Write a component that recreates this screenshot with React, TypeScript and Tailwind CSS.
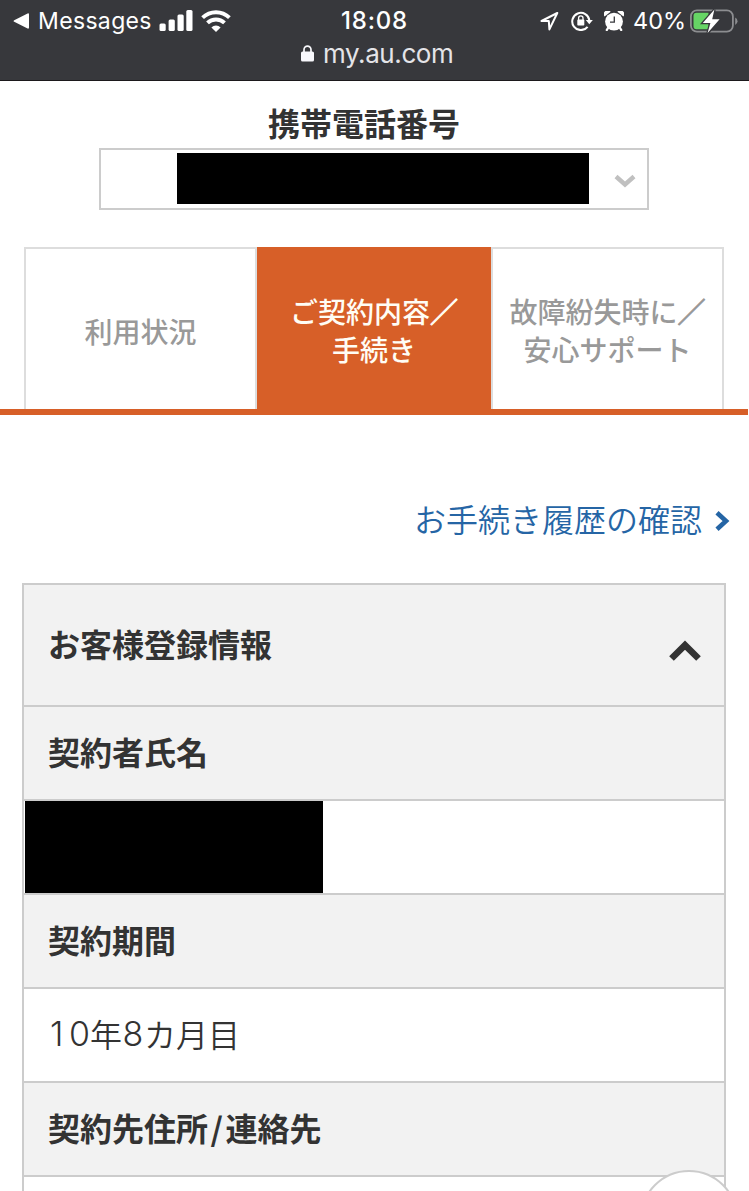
import React from "react";

function Signal() {
  return (
    <svg className="ml-[8px] h-[22px] w-[34px] shrink-0" viewBox="0 0 34 22" fill="#fff">
      <rect x="0.5" y="13.5" width="6.2" height="7.5" rx="1.5" />
      <rect x="9.6" y="9.5" width="6.2" height="11.5" rx="1.5" />
      <rect x="18.5" y="4.5" width="6.2" height="16.5" rx="1.5" />
      <rect x="27.3" y="0" width="6.2" height="21" rx="1.5" />
    </svg>
  );
}

function Wifi() {
  return (
    <svg className="ml-[8px] h-[22px] w-[30px] shrink-0" viewBox="0 0 30 22">
      <g fill="none" stroke="#fff" strokeWidth="3.9">
        <path d="M1.6 7.7a19.2 19.2 0 0 1 26.8 0" />
        <path d="M6.5 12.9a12.2 12.2 0 0 1 17 0" />
      </g>
      <path d="M15 22l-4.6-4.6a6.6 6.6 0 0 1 9.2 0z" fill="#fff" />
    </svg>
  );
}

function Location() {
  return (
    <svg className="h-[20px] w-[19px] shrink-0" viewBox="0 0 19 20">
      <path d="M17.3 2L1.5 10h7.300l.6 8.400z" fill="none" stroke="#fff" strokeWidth="2" strokeLinejoin="round" />
    </svg>
  );
}

function RotationLock() {
  return (
    <svg className="h-[20px] w-[22px] shrink-0" viewBox="0 0 22 20">
      <path d="M16.600 15.800A8.600 8.600 0 1 1 18.400 9.500" fill="none" stroke="#fff" strokeWidth="2" />
      <path d="M14.800 9h7l-3.500 4.200z" fill="#fff" />
      <rect x="6.300" y="8.600" width="7" height="6" rx="0.800" fill="#fff" />
      <path d="M7.600 9V7a2.200 2.200 0 0 1 4.400 0V9" fill="none" stroke="#fff" strokeWidth="1.300" />
    </svg>
  );
}

function Alarm() {
  return (
    <svg className="h-[20px] w-[20px] shrink-0" viewBox="0 0 20 20">
      <circle cx="10" cy="10.600" r="8.900" fill="#fff" />
      <path d="M4.600 16l-1.800 3M15.400 16l1.800 3" stroke="#fff" strokeWidth="2.400" strokeLinecap="round" />
      <path
        d="M.6 5.400A3.600 3.600 0 0 1 6.600.8zM19.400 5.400A3.600 3.600 0 0 0 13.400.8z"
        fill="#fff"
        stroke="#37383c"
        strokeWidth="0.800"
        paintOrder="stroke"
      />
      <path d="M10.300 5.500v5.600H6" fill="none" stroke="#37383c" strokeWidth="1.300" />
    </svg>
  );
}

function Battery() {
  return (
    <svg className="h-[26px] w-[50px] shrink-0" viewBox="0 0 50 26">
      <rect x="1.900" y="2.400" width="42" height="21.200" rx="6" fill="none" stroke="#8c8d90" strokeWidth="1.800" />
      <path d="M46.200 9.500v7.500a4.200 4.200 0 0 0 0-7.500z" fill="#8c8d90" />
      <path d="M7.500 4.700H19.500v16.600H7.500a3 3 0 0 1-3-3V7.700a3 3 0 0 1 3-3z" fill="#66d465" />
      <path
        d="M25.400 1.500L13.800 15h7.600L18.600 25.100 30.600 11.200h-7.400z"
        fill="#fff"
        stroke="#37383c"
        strokeWidth="2.600"
        paintOrder="stroke"
      />
    </svg>
  );
}

function StatusBar() {
  return (
    <header className="h-[81px] border-b border-[#1c191c] bg-[#37383c] font-['Inter',sans-serif] text-white">
      <div className="grid h-[41px] grid-cols-[300px_149px_300px] items-center">
        <div className="flex items-center pl-[13px]">
          <svg className="h-[16px] w-[17px] shrink-0" viewBox="0 0 17 16">
            <path d="M1.2 7.2L14.6.4q1.4-.5 1.4 1v13.2q0 1.500-1.400 1L1.200 8.800q-1.300-.800 0-1.600z" fill="#fff" />
          </svg>
          <span className="ml-[8px] w-[113px] pt-[2px] text-[23px] leading-none tracking-[0.35px] whitespace-nowrap">
            Messages
          </span>
          <Signal />
          <Wifi />
        </div>
        <span className="text-center text-[24px] leading-none font-medium tracking-[0.800px]">18:08</span>
        <div className="flex items-center pl-[91px]">
          <Location />
          <span className="w-[12px]" />
          <RotationLock />
          <span className="w-[11px]" />
          <Alarm />
          <span className="ml-[9px] w-[56px] pt-[1px] text-[23.500px] leading-none whitespace-nowrap">40%</span>
          <Battery />
        </div>
      </div>
      <div className="flex h-[26px] items-center pl-[300px]">
        <svg className="h-[18px] w-[15px] shrink-0" viewBox="0 0 15 18">
          <rect x="1" y="6.500" width="13" height="10" rx="1.600" fill="#f8f8fc" />
          <path d="M4 7.500V4.700a3.500 3.500 0 0 1 7 0V7.500" fill="none" stroke="#f8f8fc" strokeWidth="1.700" />
        </svg>
        <span className="ml-[8px] text-[26px] leading-none tracking-[-0.400px] whitespace-nowrap text-[#e4e4e8]">
          my.au.com
        </span>
      </div>
    </header>
  );
}

function Tabs() {
  return (
    <nav className="mt-[37px] w-[748px] border-b-[6px] border-[#d75f28] pl-[24px] text-[28px] leading-[38px] font-medium">
      <div className="grid h-[162px] w-[700px] grid-cols-[233px_234px_233px] text-center text-[#999]">
        <div className="flex items-center justify-center border-2 border-b-0 border-[#ddd] pt-[3px]">利用状況</div>
        <div className="flex items-center justify-center bg-[#d75f28] pt-[3px] text-[#fffdf5]">
          <span>
            ご契約内容<span className="[-webkit-text-stroke:1px_#fffdf5]">／</span>
            <br />
            手続き
          </span>
        </div>
        <div className="flex items-center justify-center border-2 border-b-0 border-[#ddd] pt-[2px]">
          <span>
            故障紛失時に<span className="[-webkit-text-stroke:1px_#999]">／</span>
            <br />
            安心サポート
          </span>
        </div>
      </div>
    </nav>
  );
}

function HeadingRow({ children }: { children: React.ReactNode }) {
  return (
    <div className="flex h-[94px] items-center border-b-2 border-[#ccc] bg-[#f2f2f2] pb-[4px] pl-[24px] font-bold">
      {children}
    </div>
  );
}

export default function App() {
  return (
    <div className="relative h-[1191px] w-[749px] overflow-hidden bg-white font-['Noto_Sans_CJK_JP',sans-serif] text-[32px] leading-[46px] text-[#333]">
      <StatusBar />
      <main>
        <h1 className="mt-[17px] mb-[2px] ml-[268px] h-[48px] leading-[48px] font-bold">携帯電話番号</h1>
        <div className="ml-[99px] flex h-[62px] w-[550px] border-2 border-[#ccc] pt-[3px] pl-[76px]">
          <div className="h-[51px] w-[412px] bg-black" />
          <svg className="mt-[21px] ml-[25px] h-[14px] w-[22px] blur-[0.600px]" viewBox="0 0 22 14">
            <path d="M2 2.500l9 8L20 2.500" fill="none" stroke="#c0c0c0" strokeWidth="4.400" />
          </svg>
        </div>
        <Tabs />
        <a className="mt-[80px] ml-[414px] flex h-[46px] items-center font-[350] text-[#2565a5]">
          お手続き履歴の確認
          <svg className="mt-[5px] ml-[13px] h-[20px] w-[15px]" viewBox="0 0 15 20">
            <path d="M2 1.800L11 10l-9 8.200" fill="none" stroke="#2565a5" strokeWidth="4.600" />
          </svg>
        </a>
        <section className="mt-[42px] ml-[22px] w-[704px] border-2 border-b-0 border-[#ccc]">
          <div className="flex h-[122px] items-center justify-between border-b-2 border-[#ccc] bg-[#f2f2f2] pr-[23px] pl-[24px] font-bold">
            <span className="pb-[4px]">お客様登録情報</span>
            <svg className="mt-[11px] h-[22px] w-[32px]" viewBox="0 0 32 22">
              <path d="M2.500 18.500L16 5.200l13.500 13.300" fill="none" stroke="#333" strokeWidth="6.600" />
            </svg>
          </div>
          <HeadingRow>契約者氏名</HeadingRow>
          <div className="h-[94px] border-b-2 border-[#ccc] pl-px">
            <div className="h-[92px] w-[298px] bg-black" />
          </div>
          <HeadingRow>契約期間</HeadingRow>
          <div className="flex h-[94px] items-center border-b-2 border-[#ccc] pb-[4px] pl-[24px] font-[350]">
            <span className="flex w-[42px] justify-between pt-[2px] pl-[2px] font-['Inter',sans-serif] text-[34px] font-light">
              <span>1</span>
              <span>0</span>
            </span>
            年
            <span className="w-[22px] pt-[2px] text-center font-['Inter',sans-serif] text-[34px] font-light">8</span>
            カ月目
          </div>
          <HeadingRow>
            契約先住所<span className="px-[2.500px]">/</span>連絡先
          </HeadingRow>
          <div className="h-[94px]" />
        </section>
      </main>
      <div className="absolute top-[1170px] left-[640px] size-[98px] rounded-full border-2 border-[#ccc] bg-white" />
    </div>
  );
}
